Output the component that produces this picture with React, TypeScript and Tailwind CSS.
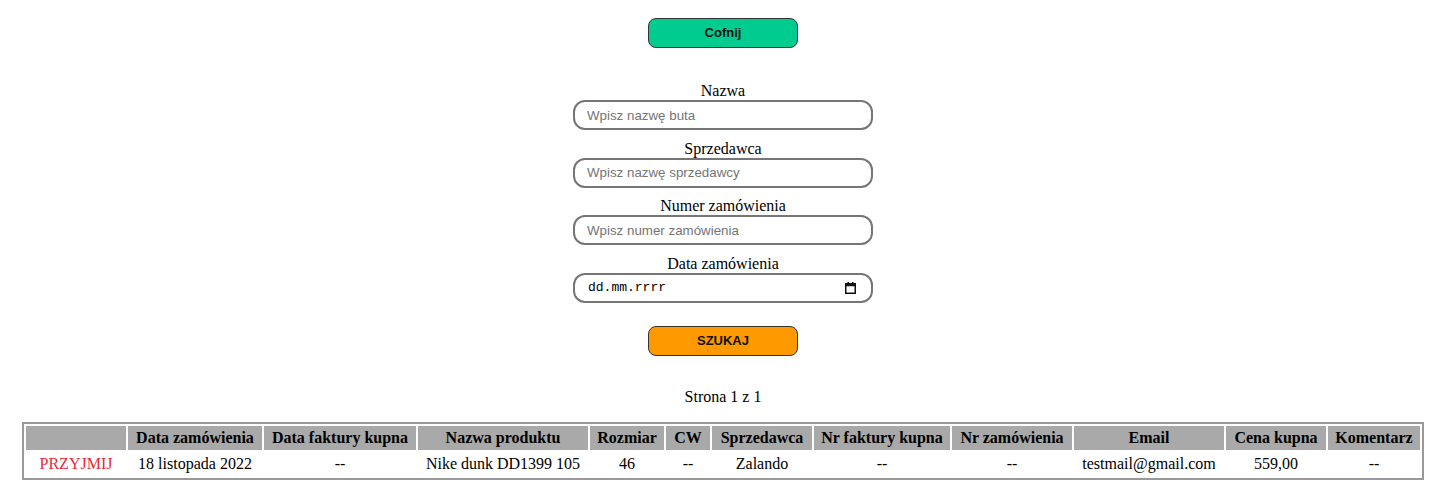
import { useState } from 'react';

const columns = [
    { label: '', width: 'w-[100px]' },
    { label: 'Data zamówienia', width: 'w-[134px]' },
    { label: 'Data faktury kupna', width: 'w-[152px]' },
    { label: 'Nazwa produktu', width: 'w-[170px]' },
    { label: 'Rozmiar', width: 'w-[74px]' },
    { label: 'CW', width: 'w-[44px]' },
    { label: 'Sprzedawca', width: 'w-[100px]' },
    { label: 'Nr faktury kupna', width: 'w-[136px]' },
    { label: 'Nr zamówienia', width: 'w-[120px]' },
    { label: 'Email', width: 'w-[150px]' },
    { label: 'Cena kupna', width: 'w-[100px]' },
    { label: 'Komentarz', width: 'w-[92px]' },
];

const orders = [
    {
        id: 1,
        date: '18 listopada 2022',
        invoiceDate: '--',
        product: 'Nike dunk DD1399 105',
        size: '46',
        cw: '--',
        seller: 'Zalando',
        invoiceNo: '--',
        orderNo: '--',
        email: 'testmail@gmail.com',
        price: '559,00',
        comment: '--',
    },
];

function CalendarIcon() {
    return (
        <svg width="11" height="12" viewBox="0 0 11 12" className="shrink-0">
            <rect x="0.75" y="1.75" width="9.5" height="9.5" fill="none" stroke="#111" strokeWidth="1.5" />
            <rect x="0.75" y="1.75" width="9.5" height="2.5" fill="#111" />
            <rect x="2.5" y="0" width="1.5" height="2" fill="#111" />
            <rect x="7" y="0" width="1.5" height="2" fill="#111" />
        </svg>
    );
}

function Field({ label, placeholder, value, onChange }: { label: string; placeholder: string; value: string; onChange: (v: string) => void }) {
    return (
        <div className="flex flex-col items-center">
            <label className="leading-[18px] text-[16px] text-black">{label}</label>
            <input
                type="text"
                value={value}
                onChange={(e) => onChange(e.target.value)}
                placeholder={placeholder}
                className="h-[30px] w-[300px] rounded-[12px] border-2 border-[#767676] bg-white px-[12px] font-['Liberation_Sans',Arial,sans-serif] text-[13.33px] text-black outline-none placeholder:text-[#757575]"
            />
        </div>
    );
}

export default function App() {
    const [name, setName] = useState('');
    const [seller, setSeller] = useState('');
    const [orderNo, setOrderNo] = useState('');

    return (
        <div className="flex min-h-[499px] flex-col items-center bg-white pl-[5px] pt-[18px] font-['Liberation_Serif','Times_New_Roman',serif] text-[16px] text-black">
            <button className="h-[30px] w-[150px] rounded-[8px] border border-[#333] bg-[#00cc90] font-['Liberation_Sans',Arial,sans-serif] text-[13px] font-bold text-[#111]">
                Cofnij
            </button>

            <form className="mt-[34px] flex flex-col items-center gap-[9.5px]" onSubmit={(e) => e.preventDefault()}>
                <Field label="Nazwa" placeholder="Wpisz nazwę buta" value={name} onChange={setName} />
                <Field label="Sprzedawca" placeholder="Wpisz nazwę sprzedawcy" value={seller} onChange={setSeller} />
                <Field label="Numer zamówienia" placeholder="Wpisz numer zamówienia" value={orderNo} onChange={setOrderNo} />
                <div className="flex flex-col items-center">
                    <label className="leading-[18px] text-[16px] text-black">Data zamówienia</label>
                    <div className="flex h-[30px] w-[300px] items-center justify-between rounded-[12px] border-2 border-[#767676] bg-white pl-[13px] pr-[15px]">
                        <span className="font-['Liberation_Mono','Courier_New',monospace] text-[13px] text-black">dd.mm.rrrr</span>
                        <CalendarIcon />
                    </div>
                </div>

                <button
                    type="submit"
                    className="mt-[14px] h-[30px] w-[150px] rounded-[8px] border border-[#333] bg-[#ff9900] font-['Liberation_Sans',Arial,sans-serif] text-[13px] font-bold text-[#111]"
                >
                    SZUKAJ
                </button>
            </form>

            <p className="mt-[32px] leading-[18px]">Strona 1 z 1</p>

            <table className="mt-[16px] w-[1402px] table-fixed border-separate border-spacing-[2px] border-2 border-[#999]">
                <colgroup>
                    {columns.map((col, i) => (
                        <col key={i} className={col.width} />
                    ))}
                </colgroup>
                <thead>
                    <tr>
                        {columns.map((col, i) => (
                            <th key={i} className="h-[24px] whitespace-nowrap bg-[#a9a9a9] p-0 text-center font-bold">
                                {col.label}
                            </th>
                        ))}
                    </tr>
                </thead>
                <tbody>
                    {orders.map((order) => (
                        <tr key={order.id} className="text-center">
                            <td className="h-[24px] p-0">
                                <a href="#" className="text-[#e8283a]">PRZYJMIJ</a>
                            </td>
                            <td className="p-0">{order.date}</td>
                            <td className="p-0">{order.invoiceDate}</td>
                            <td className="p-0 whitespace-nowrap">{order.product}</td>
                            <td className="p-0">{order.size}</td>
                            <td className="p-0">{order.cw}</td>
                            <td className="p-0">{order.seller}</td>
                            <td className="p-0">{order.invoiceNo}</td>
                            <td className="p-0">{order.orderNo}</td>
                            <td className="p-0">{order.email}</td>
                            <td className="p-0">{order.price}</td>
                            <td className="p-0">{order.comment}</td>
                        </tr>
                    ))}
                </tbody>
            </table>
        </div>
    );
}
